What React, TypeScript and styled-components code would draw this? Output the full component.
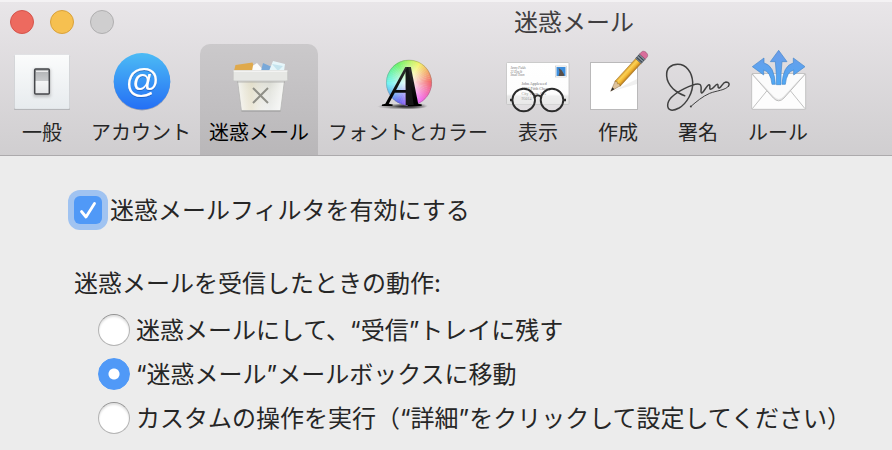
import React, { useState } from "react";
import styled, { createGlobalStyle } from "styled-components";

const GlobalStyle = createGlobalStyle`
  *, *::before, *::after { box-sizing: border-box; }
  html, body { margin: 0; min-height: 100%; background: #ececec; }
  body, button, input { font-family: Inter, "Noto Sans CJK JP", sans-serif; color: #262626; }
`;

const Window = styled.main`
  min-height: 100vh;
  background: #ececec;
`;

const Chrome = styled.header`
  background: linear-gradient(#e9e6e9, #d0ced0);
  border-bottom: 1px solid #acaaac;
  box-shadow: inset 0 2px 0 #f4f2f4;
`;

const TitleBar = styled.div`
  display: flex;
  align-items: center;
  height: 44px;
  padding-left: 10px;
`;

const Lights = styled.div`
  display: flex;
  gap: 16px;
`;

const Light = styled.button<{ $fill: string; $edge: string }>`
  width: 24px;
  height: 24px;
  padding: 0;
  border: 1px solid ${(p) => p.$edge};
  border-radius: 50%;
  background: ${(p) => p.$fill};
`;

const Spacer = styled.span<{ $grow: number }>`
  flex: ${(p) => p.$grow} 1 0;
`;

const Title = styled.h1`
  margin: 0;
  padding-top: 2px;
  font-size: 24px;
  line-height: 36px;
  font-weight: 400;
  color: #403e40;
  white-space: nowrap;
`;

const Toolbar = styled.nav`
  display: flex;
  padding: 0 2px;
`;

const Tab = styled.button<{ $width: number }>`
  display: flex;
  flex-direction: column;
  align-items: center;
  flex: none;
  width: ${(p) => p.$width}px;
  height: 111px;
  padding: 2px 0 0;
  border: 0;
  border-radius: 10px 10px 0 0;
  background: none;
  font-size: 20px;
  line-height: 34px;
  white-space: nowrap;

  &[aria-pressed="true"] {
    background: linear-gradient(#cbc9cb, #b9b7b9);
    color: #000;
  }
`;

const Art = styled.svg`
  display: block;
  flex: none;
  width: 80px;
  height: 70px;
  overflow: visible;
`;

const Pane = styled.form`
  padding: 36px 24px 8px 74px;
  font-size: 24px;
  line-height: 36px;
`;

const Option = styled.label`
  display: flex;
  align-items: center;
  white-space: nowrap;
`;

const OptionText = styled.span`
  padding-top: 2px;
`;

const CheckOption = styled(Option)`
  gap: 8px;
  height: 36px;
`;

const RadioOption = styled(Option)`
  gap: 6px;
  height: 44px;
`;

const CheckFrame = styled.span`
  display: grid;
  width: 28px;
  height: 28px;

  & > * { grid-area: 1 / 1; }
`;

const Checkbox = styled.input`
  appearance: none;
  width: 28px;
  height: 28px;
  margin: 0;
  border-radius: 6px;
  outline: none;
  background: #fff;
  box-shadow: 0 0 0 6px #a0c3f1;

  &:checked { background: #5099f7; }
`;

const CheckMark = styled.svg`
  width: 28px;
  height: 28px;
  pointer-events: none;
`;

const Group = styled.fieldset`
  margin: 36px 0 0;
  padding: 0;
  border: 0;
`;

const Legend = styled.legend`
  padding: 2px 0 0;
  margin-bottom: 6px;
`;

const Choices = styled.div`
  padding-left: 24px;
`;

const Radio = styled.input`
  appearance: none;
  flex: none;
  width: 32px;
  height: 32px;
  margin: 0;
  border: 1px solid #b4b4b4;
  border-top-color: #929292;
  border-radius: 50%;
  background: #fff;
  box-shadow: inset 0 2px 2px #e2e2e2;

  &:checked {
    border-color: #5099f7;
    background: radial-gradient(circle, #fff 5px, #5099f7 6px);
    box-shadow: none;
  }
`;

function GeneralIcon() {
  return (
    <Art viewBox="0 0 80 70" aria-hidden="true">
      <defs>
        <linearGradient id="plate" x2="0" y2="1"><stop stopColor="#fbfcfc" /><stop offset="1" stopColor="#e7ebee" /></linearGradient>
        <linearGradient id="rocker" x2="0" y2="1"><stop stopColor="#aeb0b2" /><stop offset=".47" stopColor="#c8cacc" /><stop offset=".5" stopColor="#f4f5f6" /><stop offset="1" stopColor="#e4e6e8" /></linearGradient>
        <filter id="soft" x="-40%" y="-40%" width="180%" height="180%"><feGaussianBlur stdDeviation="1.4" /></filter>
      </defs>
      <rect x="12" y="9" width="56" height="55" rx="1.5" fill="#a7a9ab" />
      <rect x="12.5" y="8.5" width="55" height="54.5" rx="1" fill="url(#plate)" stroke="#d8dadd" strokeWidth=".6" />
      <rect x="31.5" y="23" width="17" height="28" fill="#777" opacity=".4" filter="url(#soft)" />
      <rect x="32.7" y="23" width="14.600" height="25" rx="1" fill="url(#rocker)" stroke="#45474b" strokeWidth="1.5" />
      <path d="M34 25.4h12" stroke="#f2f2f2" strokeWidth="1" />
    </Art>
  );
}

function AccountsIcon() {
  return (
    <Art viewBox="0 0 80 70" aria-hidden="true">
      <defs>
        <linearGradient id="sky" x2="0" y2="1"><stop stopColor="#4cbbf5" /><stop offset="1" stopColor="#246ff5" /></linearGradient>
        <filter id="cast" x="-20%" y="-20%" width="140%" height="140%"><feDropShadow dx="0" dy="1" stdDeviation=".6" floodColor="#174fa8" floodOpacity=".6" /></filter>
      </defs>
      <circle cx="41" cy="36.3" r="28.2" fill="#6f7f9c" opacity=".6" />
      <circle cx="41" cy="35.3" r="28.3" fill="url(#sky)" />
      <text x="41" y="45.5" textAnchor="middle" fontFamily="Liberation Sans" fontStyle="italic" fontSize="34" fill="#fff" filter="url(#cast)">@</text>
    </Art>
  );
}

function JunkIcon() {
  return (
    <Art viewBox="0 0 80 70" aria-hidden="true">
      <defs>
        <linearGradient id="bin" x2="0" y2="1"><stop stopColor="#d9dad2" /><stop offset=".35" stopColor="#e5e6e0" /><stop offset="1" stopColor="#eff0ef" /></linearGradient>
        <linearGradient id="tint"><stop stopColor="#fff" stopOpacity=".6" /><stop offset=".3" stopColor="#e9ddb8" stopOpacity=".4" /><stop offset=".7" stopColor="#fff" stopOpacity="0" /><stop offset="1" stopColor="#fff" stopOpacity=".7" /></linearGradient>
      </defs>
      <path d="M15 25l1.500-6 17-2.500 3 8.500z" fill="#dfa94c" />
      <path d="M33 25l1-5.500 4-2.500L45 25z" fill="#fafbfb" />
      <path d="M42 25l2-8 9 4 1 4z" fill="#79a8d8" />
      <path d="M50 25l4-10 12 3-1 7z" fill="#e6f6fa" />
      <path d="M53 18l6 7 5-5z" fill="#c5e4ee" />
      <path d="M18.500 34l4 31h39l4-31z" fill="url(#bin)" stroke="#b8b8b6" strokeWidth=".8" />
      <path d="M19 34l4 30h38l4-30z" fill="url(#tint)" />
      <path d="M18 34.800h48v2H18z" fill="#999" opacity=".4" />
      <rect x="14.200" y="24.500" width="54.500" height="10.500" rx="1.500" fill="#e6e7e4" stroke="#c3c4c2" strokeWidth=".8" />
      <path d="M14.500 25h54" stroke="#fff" strokeWidth="1.200" />
      <path d="M22.500 65h39" stroke="#999" strokeWidth="1" />
      <path d="M34 42l15 15M49 42L34 57" stroke="#8f8f87" strokeWidth="2" />
    </Art>
  );
}

const WEDGE = 6;
const hues = Array.from({ length: 360 / WEDGE }, (_, i) => i * WEDGE);
const rim = (deg: number) => {
  const a = (deg * Math.PI) / 180;
  return `${41 + 22.8 * Math.cos(a)} ${36.7 - 22.8 * Math.sin(a)}`;
};

function FontsIcon() {
  return (
    <Art viewBox="0 0 80 70" aria-hidden="true">
      <defs>
        <radialGradient id="glow"><stop stopColor="#fff" /><stop offset=".25" stopColor="#fff" stopOpacity=".75" /><stop offset="1" stopColor="#fff" stopOpacity=".1" /></radialGradient>
        <radialGradient id="ground"><stop stopColor="#000" stopOpacity=".7" /><stop offset="1" stopColor="#000" stopOpacity="0" /></radialGradient>
        <linearGradient id="ink" x2="0" y2="1"><stop stopColor="#444" /><stop offset=".7" stopColor="#000" /></linearGradient>
      </defs>
      <ellipse cx="34" cy="60.500" rx="25" ry="3" fill="url(#ground)" />
      <ellipse cx="43" cy="60" rx="17" ry="3.500" fill="url(#ground)" />
      {hues.map((h) => (
        <path key={h} d={`M41 36.700L${rim(h - 1)}A22.800 22.800 0 0 0 ${rim(h + WEDGE)}z`} fill={`hsl(${h} 85% 63%)`} />
      ))}
      <circle cx="41" cy="36.700" r="22.800" fill="url(#glow)" />
      <circle cx="41" cy="36.700" r="22.600" fill="none" stroke="#777" strokeOpacity=".45" strokeWidth=".8" />
      <text x="17" y="60" fontFamily="Liberation Serif" fontStyle="italic" fontSize="60" fill="url(#ink)">A</text>
      <path d="M37.500 24.500l2-3.500h.7l5.500 38h-8z" fill="#161616" />
    </Art>
  );
}

function ViewIcon() {
  return (
    <Art viewBox="0 0 80 70" aria-hidden="true">
      <defs>
        <linearGradient id="card" x2="0" y2="1"><stop stopColor="#fff" /><stop offset=".75" stopColor="#fdfdfd" /><stop offset=".8" stopColor="#e9e9e9" /><stop offset="1" stopColor="#e1e1e1" /></linearGradient>
      </defs>
      <rect x="8.500" y="16.500" width="62.500" height="42" rx="1" fill="url(#card)" stroke="#c2c1c2" strokeWidth=".8" />
      <g fontFamily="Liberation Serif" fill="#6c6c6c">
        <g fontSize="3" fontStyle="italic">
          <text x="12.500" y="23">Jenny Fields</text>
          <text x="12.500" y="26.500">22 Elm St</text>
          <text x="12.500" y="30">Small Town</text>
        </g>
        <g fontSize="4">
          <text x="23.500" y="39">John Appleseed</text>
          <text x="23.500" y="44">1234 Fifth Cherry</text>
          <text x="23.500" y="49">City Town, CA</text>
          <text x="23.500" y="54">95014</text>
        </g>
      </g>
      <rect x="57.500" y="20" width="11" height="11" fill="#fff" stroke="#bbb" strokeWidth=".5" />
      <rect x="58.500" y="21" width="9" height="9" fill="#3c8ddc" />
      <path d="M60.500 22l3 2 3 5-1 1h-5l1-4z" fill="#594f48" />
      <g fill="none" stroke="#2b2b2b" strokeWidth="1.900">
        <circle cx="25.700" cy="54" r="11.300" fill="#fff" fillOpacity=".25" />
        <circle cx="54" cy="54" r="11.300" fill="#fff" fillOpacity=".25" />
        <path d="M36.500 52c1-3.500 5.800-3.500 6.800 0" />
        <path d="M12 54h3M65 54h3" strokeWidth="2.600" />
      </g>
    </Art>
  );
}

function ComposeIcon() {
  return (
    <Art viewBox="0 0 80 70" aria-hidden="true">
      <defs>
        <linearGradient id="barrel" x2="0" y2="1"><stop stopColor="#d89a28" /><stop offset=".3" stopColor="#fbd257" /><stop offset=".65" stopColor="#f2b632" /><stop offset="1" stopColor="#b5771f" /></linearGradient>
      </defs>
      <rect x="12.500" y="16.500" width="47" height="47" fill="#fff" stroke="#bab9ba" />
      <path d="M35 45L59 33v5L42 43z" fill="#f0f0f0" />
      <g transform="translate(32.700 45.200) rotate(-47.500)">
        <path d="M0 0L11-3.600v7.200z" fill="#dfc39b" stroke="#8b7050" strokeWidth=".5" />
        <path d="M0 0l4-1.300v2.600z" fill="#2f2d2c" />
        <path d="M10-3.600h31v7.200H10l1.500-2.100L10 0l1.500-1.600z" fill="url(#barrel)" stroke="#9b7026" strokeWidth=".5" />
        <rect x="41" y="-3.800" width="6" height="7.600" fill="#8593a0" stroke="#414950" strokeWidth=".6" />
        <path d="M42.500-3.800v7.600M45-3.800v7.600" stroke="#394148" strokeWidth="1" />
        <path d="M47-3.800h2.500c4 0 4 7.600 0 7.600H47z" fill="#d96d9b" stroke="#904563" strokeWidth=".5" />
      </g>
    </Art>
  );
}

function SignatureIcon() {
  return (
    <Art viewBox="0 0 80 70" aria-hidden="true">
      <g transform="translate(-3 -6) scale(.33333)" fill="none" stroke="#404040" strokeLinecap="round" strokeLinejoin="round">
        <path strokeWidth="4.500" d="M89 167C66 160 37 138 35 108C33 84 49 73 68 73C94 73 111 96 113 126C115 157 95 191 72 204C53 214 38 213 38 196C38 178 62 159 88 146C108 136 126 130 134 133C144 138 134 157 140 159C146 159 154 136 162 134C168 134 161 148 167 148C174 148 181 133 187 133C192 134 186 145 193 144C200 141 203 127 213 126C222 126 225 132 220 139" />
        <path strokeWidth="3" d="M220 139C211 151 184 152 164 160C143 169 124 185 108 199" />
        <path strokeWidth="5" d="M107 199l1 1" />
      </g>
    </Art>
  );
}

function RulesIcon() {
  return (
    <Art viewBox="0 0 80 70" aria-hidden="true">
      <defs>
        <linearGradient id="arrow" gradientUnits="userSpaceOnUse" x1="0" y1="30" x2="0" y2="135"><stop stopColor="#6d9ce8" /><stop offset="1" stopColor="#4fa9f5" /></linearGradient>
      </defs>
      <g transform="translate(-83 -6) scale(.33333)" strokeLinejoin="round">
        <rect x="290" y="101" width="162" height="107" rx="3" fill="#fdfdfd" stroke="#bcbcbc" strokeWidth="2.500" />
        <path d="M292 206L336 152M450 206L406 152" stroke="#b6b6b6" strokeWidth="2.500" />
        <path d="M291 102L355 174Q371 191 387 174L451 102z" fill="#e5e5e5" stroke="#bdbdbd" strokeWidth="3" />
        <path d="M294 102L356 169Q371 185 386 169L448 102z" fill="#fbfbfb" />
        <g fill="url(#arrow)" stroke="#4586ca" strokeWidth="2">
          <path d="M371 31L396 65H381Q377 100 378 134H364Q365 100 361 65H346z" />
          <path d="M292 80L327 54V69Q358 76 361 133H351Q347 95 326 90V105z" />
          <path d="M450 80L415 54V69Q384 76 381 133H391Q395 95 416 90V105z" />
        </g>
      </g>
    </Art>
  );
}

const tabs = [
  { label: "一般", width: 80, Icon: GeneralIcon },
  { label: "アカウント", width: 118, Icon: AccountsIcon },
  { label: "迷惑メール", width: 118, Icon: JunkIcon },
  { label: "フォントとカラー", width: 180, Icon: FontsIcon },
  { label: "表示", width: 80, Icon: ViewIcon },
  { label: "作成", width: 80, Icon: ComposeIcon },
  { label: "署名", width: 80, Icon: SignatureIcon },
  { label: "ルール", width: 80, Icon: RulesIcon },
];

const actions = [
  "迷惑メールにして、“受信”トレイに残す",
  "“迷惑メール”メールボックスに移動",
  "カスタムの操作を実行（“詳細”をクリックして設定してください）",
];

export default function App() {
  const [tab, setTab] = useState(2);
  const [enabled, setEnabled] = useState(true);
  const [action, setAction] = useState(1);

  return (
    <Window lang="ja">
      <GlobalStyle />
      <Chrome>
        <TitleBar>
          <Lights>
            <Light type="button" aria-label="閉じる" $fill="#ed6a5f" $edge="#d5544b" />
            <Light type="button" aria-label="しまう" $fill="#f6c050" $edge="#d9a13b" />
            <Light type="button" aria-label="拡大" $fill="#cfcecf" $edge="#b0afb0" />
          </Lights>
          <Spacer $grow={400} />
          <Title>迷惑メール</Title>
          <Spacer $grow={258} />
        </TitleBar>
        <Toolbar>
          {tabs.map(({ label, width, Icon }, i) => (
            <Tab key={label} type="button" $width={width} aria-pressed={tab === i} onClick={() => setTab(i)}>
              <Icon />
              {label}
            </Tab>
          ))}
        </Toolbar>
      </Chrome>
      <Pane>
        <CheckOption>
          <CheckFrame>
            <Checkbox type="checkbox" checked={enabled} onChange={(e) => setEnabled(e.target.checked)} />
            {enabled && (
              <CheckMark viewBox="0 0 28 28" aria-hidden="true">
                <path d="M7.500 15.500l4.500 5.500L20.500 7.500" fill="none" stroke="#fff" strokeWidth="2.800" strokeLinecap="round" strokeLinejoin="round" />
              </CheckMark>
            )}
          </CheckFrame>
          <OptionText>迷惑メールフィルタを有効にする</OptionText>
        </CheckOption>
        <Group>
          <Legend>迷惑メールを受信したときの動作:</Legend>
          <Choices>
            {actions.map((text, i) => (
              <RadioOption key={text}>
                <Radio type="radio" name="junk-action" checked={action === i} onChange={() => setAction(i)} />
                <OptionText>{text}</OptionText>
              </RadioOption>
            ))}
          </Choices>
        </Group>
      </Pane>
    </Window>
  );
}
